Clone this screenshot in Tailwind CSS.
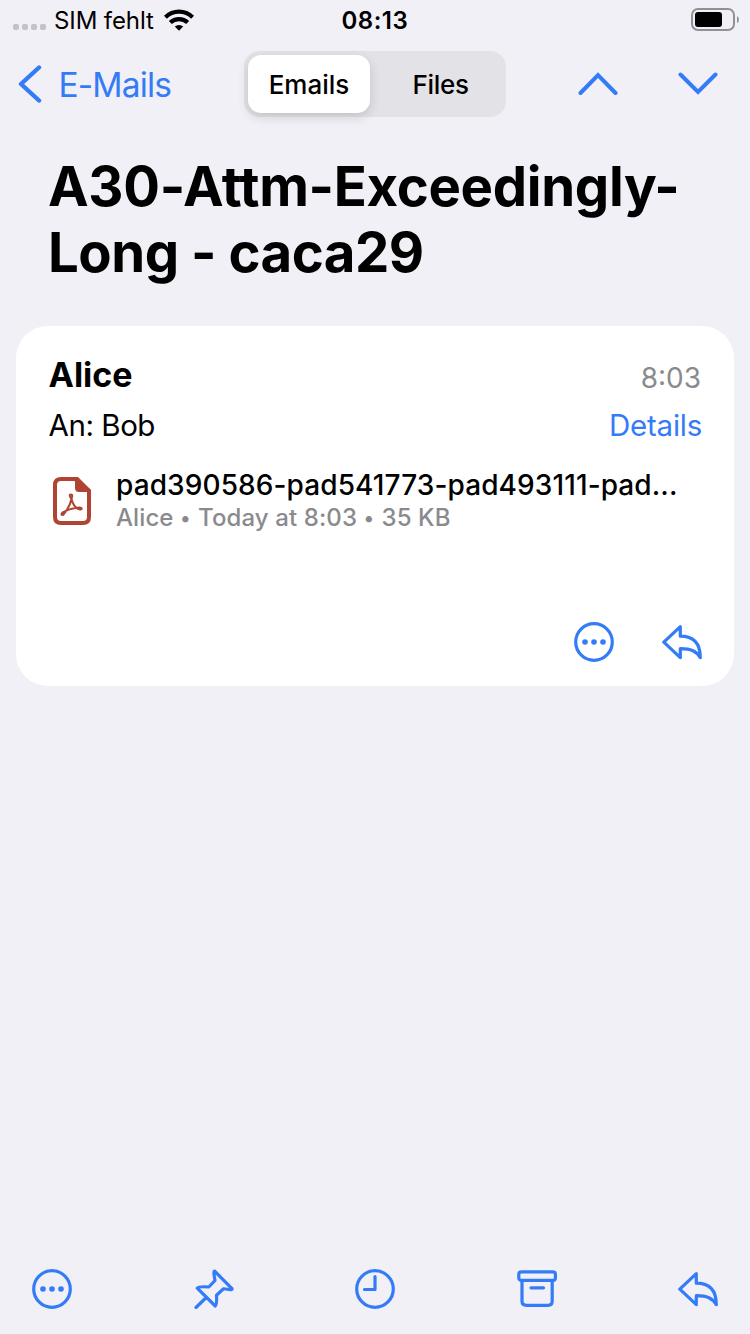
<!DOCTYPE html>
<html lang="de">
<head>
<meta charset="utf-8">
<title>E-Mails</title>
<script src="https://cdn.jsdelivr.net/npm/@tailwindcss/browser@4"></script>
</head>
<body class="w-[750px] h-[1334px] overflow-hidden bg-[#f1f0f6] font-['Inter','Liberation_Sans',sans-serif] text-black flex flex-col whitespace-nowrap">
  <svg class="hidden">
    <symbol id="more" viewBox="0 0 40 40">
      <circle cx="20" cy="20" r="18.3" fill="none" stroke="currentColor" stroke-width="3.2"/>
      <circle cx="11" cy="20" r="2.8" fill="currentColor"/><circle cx="20" cy="20" r="2.8" fill="currentColor"/><circle cx="29" cy="20" r="2.8" fill="currentColor"/>
    </symbol>
    <symbol id="reply" viewBox="0 0 40 40">
      <path d="M18.3 4.7V14.2C31 14.2 38.3 21 38.3 35.7C34.5 29 29 26.7 18.3 26.7V35.7L1.8 20.2Z" fill="none" stroke="currentColor" stroke-width="3.2" stroke-linejoin="round"/>
    </symbol>
  </svg>

  <header class="h-10 flex items-center text-2xl leading-10">
    <div class="flex gap-[3px] pl-[13px] pt-[13px] w-[54px]">
      <i class="size-1.5 rounded-[2px] bg-[#c3c2c8]"></i><i class="size-1.5 rounded-[2px] bg-[#c3c2c8]"></i><i class="size-1.5 rounded-[2px] bg-[#c3c2c8]"></i><i class="size-1.5 rounded-[2px] bg-[#c3c2c8]"></i>
    </div>
    <span class="w-[110px] pt-0.5 tracking-[-0.1px]">SIM fehlt</span>
    <svg class="w-[30px] h-[22px]" viewBox="0 0 30 22" fill="none" stroke="#000" stroke-width="4.2">
      <path d="M1.4 8.2A19.4 19.4 0 0 1 28.6 8.2"/><path d="M6.3 13.6A12.4 12.4 0 0 1 23.7 13.6"/><path d="M15 21.8L10.8 17.6A6 6 0 0 1 19.2 17.6Z" fill="#000" stroke="none"/>
    </svg>
    <span class="ml-[147.5px] pt-0.5 font-semibold tracking-[0.5px]">08:13</span>
    <svg class="ml-auto mr-2.5 w-[49px] h-6" viewBox="0 0 49 24">
      <rect x="1" y="1" width="42" height="21" rx="6" fill="none" stroke="#919095" stroke-width="2"/><rect x="4" y="4" width="27" height="15" rx="3" fill="#000"/><path d="M46 8Q48 9 48 11.5Q48 14 46 15Z" fill="#919095"/>
    </svg>
  </header>

  <nav class="h-[88px] flex items-center text-[#347bf7]">
    <svg class="w-[24px] h-10 ml-[18px]" viewBox="0 0 24 40"><path d="M21 3.5L3 20L21 36.5" fill="none" stroke="currentColor" stroke-width="4.4" stroke-linecap="round" stroke-linejoin="round"/></svg>
    <div class="w-[202px] pl-[16.5px] pt-0.5 text-[33.5px] tracking-[-0.85px]">E-Mails</div>
    <div class="w-[262px] h-[66px] rounded-2xl bg-[#e3e2e7] p-1 flex text-black text-[26px] font-medium items-center">
      <div class="w-[122px] h-[58px] rounded-[13px] bg-white flex items-center justify-center shadow-[0_4px_12px_rgba(0,0,0,0.14)]">Emails</div>
      <div class="flex-1 text-center pl-[9px] tracking-[-0.3px]">Files</div>
    </div>
    <svg class="w-10 h-6 ml-[72px]" viewBox="0 0 40 24"><path d="M2.5 21L20 3L37.5 21" fill="none" stroke="currentColor" stroke-width="4" stroke-linecap="round"/></svg>
    <svg class="w-10 h-6 ml-[60px]" viewBox="0 0 40 24"><path d="M2.5 2.5L20 20L37.5 2.5" fill="none" stroke="currentColor" stroke-width="4" stroke-linecap="round"/></svg>
  </nav>

  <main class="flex-1 pt-[25px]">
    <h1 class="h-[173px] pl-12 text-[54.5px] leading-[66px] font-bold tracking-[-0.33px]">A30-Attm-Exceedingly-<br><span class="tracking-[-0.5px]">Long - caca29</span></h1>
    <article class="mx-4 h-[360px] rounded-[32px] bg-white px-8 pt-6 flex flex-col">
      <div class="flex justify-between items-center h-12"><span class="text-[34px] font-bold pl-[0.5px]">Alice</span><span class="text-[28px] text-[#8a8a8e] pt-2 pr-px">8:03</span></div>
      <div class="flex justify-between items-center h-[53px] pt-px text-[29.5px] tracking-[-0.45px]"><span class="pl-[0.5px]">An: Bob</span><span class="text-[#347bf7] tracking-[-0.25px]">Details</span></div>
      <div class="flex mt-[17px]">
        <svg class="w-[38px] h-12 ml-[5px] mt-[9px]" viewBox="0 0 38 48" fill="none" stroke="#b04432">
          <path d="M8 2H22L36 14V40Q36 46 30 46H8Q2 46 2 40V8Q2 2 8 2Z" stroke-width="4"/><path d="M22 0H25L38 13V15H26Q22 15 22 11Z" fill="#b04432" stroke="none"/>
          <path d="M18.5 22C16.4 19 16.2 17.4 18 17.4C19.8 17.4 19.4 19.4 18.5 22C17.2 28 14.2 33 11 37C9.2 39 7.4 37.3 9.4 35.7C14 32.6 20.5 31.2 26.2 30.6C29.6 30.4 29.4 32.8 26.5 32.4C22.8 31.4 19.8 27.5 18.5 22Z" stroke-width="2" stroke-linejoin="round"/>
        </svg>
        <div class="ml-[25px] font-medium"><div class="text-[28px] leading-[35px] tracking-[0.1px]">pad390586-pad541773-pad493111-pad...</div><div class="text-2xl leading-[30px] text-[#8a8a8e] tracking-[0.1px]">Alice <span class="text-xl align-[1.5px] tracking-[0.8px]">•</span> Today at 8:03 <span class="text-xl align-[1.5px] tracking-[0.8px]">•</span> 35 KB</div></div>
      </div>
      <div class="mt-auto mb-6 flex justify-end gap-12 text-[#347bf7]"><svg class="size-10"><use href="#more"/></svg><svg class="size-10"><use href="#reply"/></svg></div>
    </article>
  </main>

  <footer class="h-[90px] px-8 pt-[25px] flex justify-between text-[#347bf7] stroke-current">
    <svg class="size-10" stroke="none"><use href="#more"/></svg>
    <svg class="size-10" viewBox="0 0 40 40" fill="none" stroke-width="3.2" stroke-linecap="round" stroke-linejoin="round"><path d="M20.5 2L38 19.6C38.5 20.8 36 21 29.5 19.8L22.5 26.2C22.8 31.5 22.6 36 21.3 37L3.2 19.2C4 17.8 9 17.6 14.8 18L21 11.5C20.2 7 19.3 2.5 20.5 2ZM12.2 28.5L2 38.5"/></svg>
    <svg class="size-10" viewBox="0 0 40 40" fill="none" stroke-width="3.2" stroke-linecap="round" stroke-linejoin="round"><circle cx="20" cy="20" r="18.3"/><path d="M20 7.5V20.5H9.5"/></svg>
    <svg class="size-10" viewBox="0 0 40 40" fill="none" stroke-width="3.2" stroke-linecap="round" stroke-linejoin="round"><rect x="1.8" y="2.9" width="36.6" height="8.5" rx="2.5"/><path d="M5 12V32Q5 36.3 9.5 36.3H31Q35.2 36.3 35.2 32V12M14 18.8H26.5"/></svg>
    <svg class="size-10" stroke="none"><use href="#reply"/></svg>
  </footer>
</body>
</html>
